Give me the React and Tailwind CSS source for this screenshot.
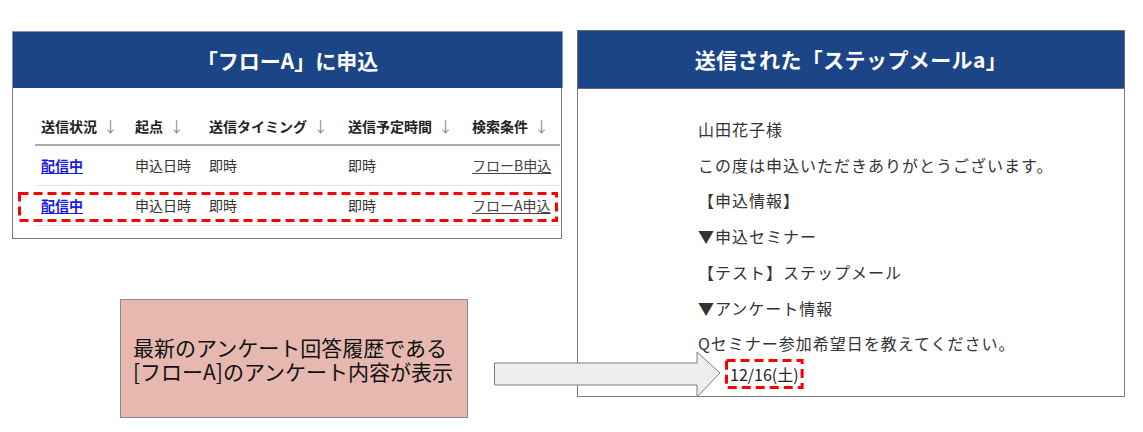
import React from "react";

function DashBox({ className }) {
  return (
    <svg className={className} width="100%" height="100%" preserveAspectRatio="none">
      <rect x="1.5" y="1.5" width="calc(100% - 3px)" height="calc(100% - 3px)" fill="none" stroke="#ff0000" strokeWidth="3" strokeDasharray="9 5" />
    </svg>
  );
}

function FixedDash({ w, h, className }) {
  return (
    <svg className={className} width={w} height={h} viewBox={`0 0 ${w} ${h}`}>
      <rect x="1.5" y="1.5" width={w - 3} height={h - 3} fill="none" stroke="#ff0000" strokeWidth="3" strokeDasharray="9 5" />
    </svg>
  );
}

function Arrow() {
  return <span className="ml-[6px] font-normal text-[#8a8a8a] text-[15px]">↓</span>;
}

export default function App() {
  const rows = [
    { s: "配信中", k: "申込日時", t: "即時", p: "即時", c: "フローB申込" },
    { s: "配信中", k: "申込日時", t: "即時", p: "即時", c: "フローA申込" },
  ];
  const lines = [
    "山田花子様",
    "この度は申込いただきありがとうございます。",
    "【申込情報】",
    "▼申込セミナー",
    "【テスト】ステップメール",
    "▼アンケート情報",
    "Qセミナー参加希望日を教えてください。",
  ];
  return (
    <div className="relative w-[1143px] h-[432px] bg-white font-['Noto_Sans_CJK_JP',sans-serif] overflow-hidden">
      <div className="flex items-start pt-[30px] pl-[12px] gap-[14px]">
        {/* left column */}
        <div className="flex flex-col w-[551px] mt-[1px]">
          <div className="h-[57px] bg-[#1c4587] border-t border-x border-[#8497bd] flex items-center justify-center">
            <span className="text-white font-bold text-[21px] leading-none">「フローA」に申込</span>
          </div>
          <div className="relative border-x border-b border-[#7a7a7a] pl-[22px] pt-[20px] pb-[12px] w-[550px]">
            <div className="grid grid-cols-[94px_74px_139px_124px_94px] text-[14px]">
              {["送信状況", "起点", "送信タイミング", "送信予定時間", "検索条件"].map((h) => (
                <div key={h} className="h-[38px] flex items-center pl-[6px] font-bold text-[#222] border-b-2 border-[#aaaaaa] whitespace-nowrap">
                  <span>{h}</span>
                  <Arrow />
                </div>
              ))}
              {rows.map((r, i) => (
                <React.Fragment key={i}>
                  <div className="h-[40px] flex items-center pl-[6px] border-b border-[#e2e2e2]">
                    <span className="font-bold text-[#1a1ae6] underline underline-offset-2">{r.s}</span>
                  </div>
                  <div className="h-[40px] flex items-center pl-[6px] border-b border-[#e2e2e2] text-[#333]">{r.k}</div>
                  <div className="h-[40px] flex items-center pl-[6px] border-b border-[#e2e2e2] text-[#333]">{r.t}</div>
                  <div className="h-[40px] flex items-center pl-[6px] border-b border-[#e2e2e2] text-[#333]">{r.p}</div>
                  <div className="h-[40px] flex items-center pl-[6px] border-b border-[#e2e2e2]">
                    <span className="text-[#444] underline underline-offset-2 whitespace-nowrap">{r.c}</span>
                  </div>
                </React.Fragment>
              ))}
            </div>
            <FixedDash w={540} h={30} className="absolute left-[5px] top-[104px]" />
          </div>

          <div className="ml-[108px] mt-[60px] w-[348px] h-[119px] bg-[#e6b8af] border border-[#8a8a8a] flex flex-col justify-center pl-[12px]">
            <p className="text-[21px] leading-[24px] text-[#111] whitespace-nowrap">最新のアンケート回答履歴である</p>
            <p className="text-[21px] leading-[24px] text-[#111] whitespace-nowrap">[フローA]のアンケート内容が表示</p>
          </div>
        </div>

        {/* right column */}
        <div className="flex flex-col w-[548px]">
          <div className="h-[59px] bg-[#1c4587] border border-[#6b6b6b] flex items-center justify-center">
            <span className="text-white font-bold text-[21px] leading-none tracking-[0.4px]">送信された「ステップメールa」</span>
          </div>
          <div className="border-x border-b border-[#7a7a7a] pl-[120px] pt-[23px] pb-[8px] h-[308px]">
            {lines.map((l) => (
              <div key={l} className="text-[16px] leading-[35.7px] tracking-[1px] text-[#333] whitespace-nowrap">{l}</div>
            ))}
            <div className="ml-[27px] -mt-[3px] relative inline-flex h-[30px] items-center pl-[5px] pr-[5px]">
              <span className="text-[16px] text-[#222] whitespace-nowrap">12/16(土)</span>
              <DashBox className="absolute left-0 top-0" />
            </div>
          </div>
        </div>
      </div>

      <svg className="absolute left-[494px] top-[351px]" width="230" height="48" viewBox="0 0 230 48">
        <polygon points="0.5,12 203,12 203,1 226,22 203,46 203,34 0.5,34" fill="#eeeeee" stroke="#7f7f7f" strokeWidth="1" />
      </svg>
    </div>
  );
}
